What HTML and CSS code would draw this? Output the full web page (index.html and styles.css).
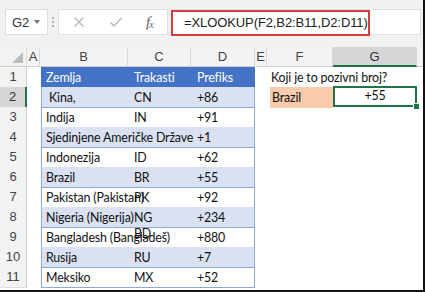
FILE: index.html
```html
<!DOCTYPE html>
<html>
<head>
<meta charset="utf-8">
<link rel="stylesheet" href="styles.css">
</head>
<body>
<div class="frame">
  <div class="toolbar">
    <div class="namebox"><span class="nb-text">G2</span><span class="caret"></span></div>
    <div class="grip"><i></i><i></i><i></i></div>
    <div class="btns">
      <svg class="ico" width="12" height="12" viewBox="0 0 12 12"><path d="M1.5 1.5 L10.5 10.5 M10.5 1.5 L1.5 10.5" stroke="#b9b9b9" stroke-width="1.4" fill="none"/></svg>
      <svg class="ico" width="14" height="12" viewBox="0 0 14 12"><path d="M1.5 6.5 L5 10 L12.5 2" stroke="#b9b9b9" stroke-width="1.5" fill="none"/></svg>
      <span class="fx">f<sub>x</sub></span>
    </div>
    <div class="fbar"><div class="formula">=XLOOKUP(F2,B2:B11,D2:D11)</div></div>
  </div>
  <div class="sheet">
    <div class="row colhdr">
      <div class="corner"><span class="tri"></span></div>
      <div class="ch">A</div>
      <div class="tbl-h"><div class="ch">B</div><div class="ch">C</div><div class="ch">D</div></div>
      <div class="ch">E</div>
      <div class="ch">F</div>
      <div class="ch sel">G</div>
      <div class="ch last"></div>
    </div>

    <div class="row">
      <div class="rh">1</div><div class="c"></div>
      <div class="tbl head"><div class="c">Zemlja</div><div class="c">Trakasti</div><div class="c">Prefiks</div></div>
      <div class="c"></div><div class="c">Koji je to pozivni broj?</div><div class="c"></div><div class="c"></div>
    </div>
    <div class="row">
      <div class="rh active">2</div><div class="c"></div>
      <div class="tbl band"><div class="c">&nbsp;Kina,</div><div class="c">CN</div><div class="c">+86</div></div>
      <div class="c"></div><div class="c input">Brazil</div><div class="c result"><span class="res-box">+55</span><span class="handle"></span></div><div class="c"></div>
    </div>
    <div class="row">
      <div class="rh">3</div><div class="c"></div>
      <div class="tbl"><div class="c">Indija</div><div class="c">IN</div><div class="c">+91</div></div>
      <div class="c"></div><div class="c"></div><div class="c"></div><div class="c"></div>
    </div>
    <div class="row">
      <div class="rh">4</div><div class="c"></div>
      <div class="tbl band"><div class="c">Sjedinjene Američke Države</div><div class="c"></div><div class="c">+1</div></div>
      <div class="c"></div><div class="c"></div><div class="c"></div><div class="c"></div>
    </div>
    <div class="row">
      <div class="rh">5</div><div class="c"></div>
      <div class="tbl"><div class="c">Indonezija</div><div class="c">ID</div><div class="c">+62</div></div>
      <div class="c"></div><div class="c"></div><div class="c"></div><div class="c"></div>
    </div>
    <div class="row">
      <div class="rh">6</div><div class="c"></div>
      <div class="tbl band"><div class="c">Brazil</div><div class="c">BR</div><div class="c">+55</div></div>
      <div class="c"></div><div class="c"></div><div class="c"></div><div class="c"></div>
    </div>
    <div class="row">
      <div class="rh">7</div><div class="c"></div>
      <div class="tbl"><div class="c">Pakistan (Pakistan)</div><div class="c">PK</div><div class="c">+92</div></div>
      <div class="c"></div><div class="c"></div><div class="c"></div><div class="c"></div>
    </div>
    <div class="row">
      <div class="rh">8</div><div class="c"></div>
      <div class="tbl band"><div class="c">Nigeria (Nigerija)</div><div class="c">NG</div><div class="c">+234</div></div>
      <div class="c"></div><div class="c"></div><div class="c"></div><div class="c"></div>
    </div>
    <div class="row">
      <div class="rh">9</div><div class="c"></div>
      <div class="tbl"><div class="c">Bangladesh (Bangladeš)</div><div class="c up">BD</div><div class="c">+880</div></div>
      <div class="c"></div><div class="c"></div><div class="c"></div><div class="c"></div>
    </div>
    <div class="row">
      <div class="rh">10</div><div class="c"></div>
      <div class="tbl band"><div class="c">Rusija</div><div class="c">RU</div><div class="c">+7</div></div>
      <div class="c"></div><div class="c"></div><div class="c"></div><div class="c"></div>
    </div>
    <div class="row">
      <div class="rh">11</div><div class="c"></div>
      <div class="tbl lastrow"><div class="c">Meksiko</div><div class="c">MX</div><div class="c">+52</div></div>
      <div class="c"></div><div class="c"></div><div class="c"></div><div class="c"></div>
    </div>
  </div>
</div>
</body>
</html>
```

FILE: styles.css
```css
* { box-sizing: border-box; }
html, body { margin: 0; padding: 0; background: #fff; }
body { width: 425px; height: 292px; overflow: hidden; font-family: "Liberation Sans", Arial, sans-serif; }

.frame {
  width: 425px; height: 292px;
  border-right: 2px solid #111;
  border-bottom: 2px solid #111;
  background: #fff;
  display: flex; flex-direction: column;
}

/* ---------- formula toolbar ---------- */
.toolbar {
  height: 47px;
  background: #f1f1f1;
  display: flex;
  align-items: flex-start;
  padding: 9px 0 0 5px;
}
.namebox {
  width: 43px; height: 26px;
  background: #fff;
  border: 1px solid #dcdcdc;
  display: flex; align-items: center;
  padding-left: 6px;
  font-size: 13px; color: #333;
}
.nb-text { width: 22px; }
.caret {
  width: 0; height: 0;
  border-left: 3.5px solid transparent;
  border-right: 3.5px solid transparent;
  border-top: 4px solid #777;
}
.grip {
  width: 10px; height: 26px;
  display: flex; flex-direction: column; align-items: center; justify-content: center; gap: 2px;
}
.grip i { width: 2px; height: 2px; background: #b5b5b5; display: block; }
.btns {
  width: 110px; height: 26px;
  background: #fff;
  border: 1px solid #e0e0e0;
  display: flex; align-items: center;
  padding-left: 14px;
}
.btns .ico:first-child { margin-right: 24px; }
.btns .ico:nth-child(2) { margin-right: 23px; }
.fx {
  font-family: "Liberation Serif", "Times New Roman", serif;
  font-style: italic; font-size: 15px; color: #666;
  letter-spacing: -1px;
}
.fx sub { font-size: 10px; vertical-align: 0; position: relative; top: 1px; }
.fbar {
  width: 250px; height: 26px;
  margin-left: 3px;
  background: #fff;
  border: 1px solid #e0e0e0;
  border-left: none;
}
.formula {
  width: 199px; height: 26px;
  border: 2px solid #dc3b3b;
  padding-left: 11px;
  font-size: 13px; line-height: 22px; color: #222;
  white-space: nowrap;
  letter-spacing: -0.1px;
}

/* ---------- sheet grid ---------- */
.sheet { display: flex; flex-direction: column; }
.row {
  display: grid;
  grid-template-columns: 27px 13px 215px 12px 66px 84px 1fr;
  height: 20px;
}
.colhdr { background: #f3f3f3; }
.ch, .corner {
  height: 20px;
  border-right: 1px solid #d8d8d8;
  border-bottom: 1px solid #d0d0d0;
  font-size: 13px; color: #444;
  text-align: center; line-height: 19px;
}
.ch.last { border-right: none; }
.ch.sel { background: #d6d6d6; border-bottom: 2px solid #217346; color: #333; }
.corner { position: relative; }
.tri {
  position: absolute; right: 3px; bottom: 3px;
  width: 0; height: 0;
  border-left: 11px solid transparent;
  border-bottom: 11px solid #bcbcbc;
}
.tbl-h, .tbl {
  display: grid;
  grid-template-columns: 88px 63px 64px;
}

.rh {
  background: #f3f3f3;
  border-right: 1px solid #d0d0d0;
  border-bottom: 1px solid #dedede;
  font-size: 13px; color: #444;
  text-align: center; line-height: 20px;
}
.rh.active { background: #d6d6d6; border-right: 2px solid #217346; color: #333; }

.c {
  font-family: Lato, "Liberation Sans", sans-serif;
  font-size: 12.4px; color: #111;
  letter-spacing: -0.15px;
  line-height: 20px;
  padding: 1px 0 0 4px;
  white-space: nowrap;
  overflow: visible;
}
.tbl {
  border-left: 1px solid #8ea9db;
  border-right: 1px solid #8ea9db;
  border-bottom: 1px solid #8ea9db;
  margin-left: 1px;
}
.tbl .c { line-height: 19px; }
.tbl.head { background: #4472c4; border-color: #4472c4; border-bottom-color: #8ea9db; }
.tbl.head .c { color: #fff; }
.tbl.band { background: #d9e1f2; }
.up { position: relative; top: -4px; }

.input { background: #f8cbad; margin-left: 3px; padding-left: 2px; }
.result { position: relative; padding: 0; }
.res-box {
  display: block;
  height: 21px;
  margin-top: -1px;
  border: 2px solid #217346;
  text-align: center;
  line-height: 16px;
}
.handle {
  position: absolute; right: -3px; bottom: -2px;
  width: 5px; height: 5px;
  background: #217346;
  border: 1px solid #fff;
  box-sizing: content-box;
}
```
